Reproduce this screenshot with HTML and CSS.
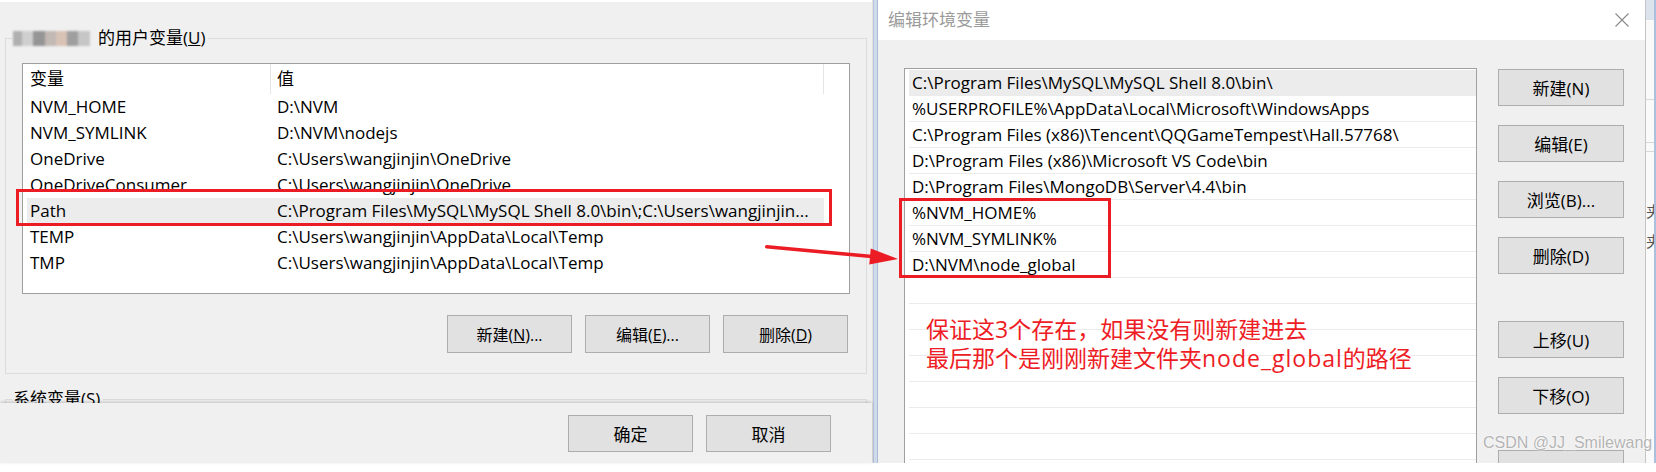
FILE: index.html
```html
<!DOCTYPE html>
<html lang="zh-CN">
<head>
<meta charset="utf-8">
<title>环境变量</title>
<link rel="stylesheet" href="styles.css">
</head>
<body>
<div class="screen">
  <section class="envwin">
    <fieldset class="group">
      <legend class="group-label"><span class="blur-name"></span>的用户变量(<u>U</u>)</legend>
      <div class="group-body">
        <div class="listview">
          <div class="lv-head"><div class="lv-col1">变量</div><div class="lv-col2">值</div></div>
          <div class="lv-row"><span>NVM_HOME</span><span>D:\NVM</span></div>
          <div class="lv-row"><span>NVM_SYMLINK</span><span>D:\NVM\nodejs</span></div>
          <div class="lv-row"><span>OneDrive</span><span>C:\Users\wangjinjin\OneDrive</span></div>
          <div class="lv-row"><span>OneDriveConsumer</span><span>C:\Users\wangjinjin\OneDrive</span></div>
          <div class="lv-row sel"><span>Path</span><span>C:\Program Files\MySQL\MySQL Shell 8.0\bin\;C:\Users\wangjinjin...</span></div>
          <div class="lv-row"><span>TEMP</span><span>C:\Users\wangjinjin\AppData\Local\Temp</span></div>
          <div class="lv-row"><span>TMP</span><span>C:\Users\wangjinjin\AppData\Local\Temp</span></div>
        </div>
        <div class="btn-row">
          <button class="btn">新建(<u>N</u>)...</button>
          <button class="btn">编辑(<u>E</u>)...</button>
          <button class="btn">删除(<u>D</u>)</button>
        </div>
      </div>
    </fieldset>
    <div class="sys-clip">
      <fieldset class="group sys"><legend class="group-label">系统变量(<u>S</u>)</legend></fieldset>
    </div>
    <div class="footer">
      <button class="btn">确定</button>
      <button class="btn">取消</button>
    </div>
  </section>

  <div class="frame-edge"></div>

  <section class="editwin">
    <header class="titlebar">
      <span class="title">编辑环境变量</span>
      <svg class="close" viewBox="0 0 14 14"><path d="M0.5 0.5 L13.5 13.5 M13.5 0.5 L0.5 13.5" stroke="#8a8a8a" stroke-width="1.1" fill="none"/></svg>
    </header>
    <div class="edit-body">
      <div class="pathlist">
        <div class="pl-row sel">C:\Program Files\MySQL\MySQL Shell 8.0\bin\</div>
        <div class="pl-row">%USERPROFILE%\AppData\Local\Microsoft\WindowsApps</div>
        <div class="pl-row">C:\Program Files (x86)\Tencent\QQGameTempest\Hall.57768\</div>
        <div class="pl-row">D:\Program Files (x86)\Microsoft VS Code\bin</div>
        <div class="pl-row">D:\Program Files\MongoDB\Server\4.4\bin</div>
        <div class="pl-row">%NVM_HOME%</div>
        <div class="pl-row">%NVM_SYMLINK%</div>
        <div class="pl-row">D:\NVM\node_global</div>
        <div class="pl-row"></div>
        <div class="pl-row"></div>
        <div class="pl-row"></div>
        <div class="pl-row"></div>
        <div class="pl-row"></div>
        <div class="pl-row"></div>
        <div class="pl-row"></div>
        <div class="pl-row"></div>
        <div class="note">保证这3个存在，如果没有则新建进去<br>最后那个是刚刚新建文件夹<span class="note-latin">node_global</span>的路径</div>
      </div>
      <div class="btn-col">
        <button class="btn">新建(N)</button>
        <button class="btn">编辑(E)</button>
        <button class="btn">浏览(B)...</button>
        <button class="btn">删除(D)</button>
        <button class="btn push">上移(U)</button>
        <button class="btn">下移(O)</button>
        <button class="btn push2">编辑文本(T)...</button>
      </div>
    </div>
  </section>

  <div class="bgstrip">
    <div class="bg-top"></div>
    <div class="bg-rule r1"></div>
    <div class="bg-rule r2"></div>
    <div class="bg-rule r3"></div>
    <div class="bg-char first">夹</div>
    <div class="bg-char">夹</div>
  </div>

  <div class="mark mark-path"></div>
  <div class="mark mark-nvm"></div>
  <svg class="arrow" viewBox="0 0 145 30">
    <line x1="6.7" y1="6.7" x2="112" y2="16.6" stroke="#ec1c24" stroke-width="3.5" stroke-linecap="round"/>
    <polygon points="138,19 110.75,8.4 109.25,24.4" fill="#ec1c24"/>
  </svg>
  <div class="watermark">CSDN @JJ_Smilewang</div>
</div>
</body>
</html>
```

FILE: styles.css
```css
* { box-sizing: border-box; }
html, body { margin: 0; padding: 0; }
body {
  width: 1656px;
  height: 472px;
  overflow: hidden;
  background: #fff;
  font-family: "Open Sans", "Noto Sans CJK SC", sans-serif;
  font-size: 17px;
  color: #000;
}
.screen {
  position: relative;
  display: flex;
  height: 463px;
}

/* ---------- left window: 环境变量 ---------- */
.envwin {
  width: 872px;
  flex: none;
  display: flex;
  flex-direction: column;
  background: #f0f0f0;
  border-top: 2px solid #fff;
}
.group {
  margin: 26px 5px 0;
  padding: 15px 0 20px;
  border: 1px solid #dcdcdc;
  min-width: 0;
}
.group-label {
  margin-left: 6px;
  padding: 0 3px 0 1px;
  line-height: 20px;
  height: 20px;
  white-space: nowrap;
}
.blur-name {
  display: inline-block;
  width: 77px;
  height: 15px;
  margin-right: 8px;
  vertical-align: -2px;
  background: linear-gradient(to right, #b0b0b0 0 12%, #cfcfcf 12% 26%, #959595 26% 42%, #c2b8b4 42% 56%, #d8c2b6 56% 70%, #9f9f9f 70% 85%, #c6c6c6 85%);
  filter: blur(1.2px);
}
.group-body { padding: 0 16px; }
.listview {
  height: 231px;
  background: #fff;
  border: 1px solid #9e9e9e;
  overflow: hidden;
}
.lv-head {
  display: flex;
  height: 30px;
  line-height: 30px;
}
.lv-col1 {
  width: 248px;
  padding-left: 7px;
  border-right: 1px solid #e5e5e5;
}
.lv-col2 {
  width: 553px;
  padding-left: 6px;
  border-right: 1px solid #e5e5e5;
}
.lv-row {
  display: grid;
  grid-template-columns: 247px 1fr;
  width: 797px;
  margin-left: 4px;
  padding-left: 3px;
  height: 26px;
  line-height: 26px;
  white-space: nowrap;
  overflow: hidden;
}
.lv-row.sel { background: #ececec; }

.btn {
  font-family: inherit;
  font-size: 17px;
  color: #000;
  background: #e1e1e1;
  border: 1px solid #adadad;
  border-radius: 0;
  padding: 0;
  white-space: nowrap;
}
.btn-row {
  display: flex;
  justify-content: flex-end;
  gap: 13px;
  margin-top: 21px;
  padding-right: 2px;
}
.btn-row .btn {
  width: 125px;
  height: 38px;
  font-size: 16px;
}
.sys-clip {
  flex: none;
  height: 29px;
  overflow: hidden;
}
.group.sys {
  margin-top: 15px;
  height: 60px;
  padding: 0;
}
.footer {
  flex: none;
  height: 60px;
  position: relative;
  z-index: 1;
  background: #f0f0f0;
  box-shadow: 0 -1px 3px rgba(0, 0, 0, 0.2);
  display: flex;
  justify-content: flex-end;
  align-items: flex-start;
  gap: 13px;
  padding: 12px 41px 0 0;
}
.footer .btn {
  width: 125px;
  height: 37px;
}

.frame-edge {
  width: 6px;
  flex: none;
  background: linear-gradient(to right, #e2e2e2 0 1px, #b4c5dc 1px 2px, #cfdbeb 2px 5px, #a9bcd6 5px 6px);
}

/* ---------- right window: 编辑环境变量 ---------- */
.editwin {
  width: 767px;
  flex: none;
  display: flex;
  flex-direction: column;
  background: #f0f0f0;
  overflow: hidden;
}
.titlebar {
  height: 40px;
  flex: none;
  background: #fff;
  display: flex;
  align-items: center;
  justify-content: space-between;
  padding: 0 16px 4px 10px;
}
.title {
  color: #9b9b9b;
  font-size: 17px;
}
.close {
  width: 14px;
  height: 14px;
  margin-top: 4px;
}
.edit-body {
  flex: 1;
  min-height: 0;
  display: flex;
  padding: 28px 21px 0 26px;
  overflow: hidden;
}
.pathlist {
  width: 573px;
  flex: none;
  position: relative;
  background: #fff;
  border: 1px solid #a0a0a0;
  border-bottom: 0;
  padding: 1px 0 0 4px;
  overflow: hidden;
}
.pl-row {
  height: 26px;
  line-height: 25px;
  padding-left: 3px;
  border-bottom: 1px solid #ebebeb;
  white-space: nowrap;
}
.pl-row.sel { background: #ececec; }
.note {
  position: absolute;
  left: 21px;
  top: 246px;
  color: #ee1d25;
  font-family: "Open Sans", "Noto Sans CJK SC", sans-serif;
  font-size: 23px;
  line-height: 29px;
  white-space: nowrap;
}
.note-latin { letter-spacing: 1px; }
.btn-col {
  margin-left: 21px;
  width: 126px;
  flex: none;
  display: flex;
  flex-direction: column;
  gap: 19px;
  padding-top: 1px;
}
.btn-col .btn {
  height: 37px;
  flex: none;
}
.btn-col .push { margin-top: 28px; }
.btn-col .push2 {
  margin-top: 17px;
  padding-top: 14px;
}

/* ---------- background window sliver ---------- */
.bgstrip {
  flex: 1;
  background: #fafafa;
  border-left: 1px solid #c4c4c4;
  border-right: 2px solid #a9c0de;
  overflow: hidden;
}
.bg-top { height: 20px; background: #dde3ec; }
.bg-rule { border-top: 1px solid #d8d8d8; }
.r1 { margin-top: 79px; }
.r2 { margin-top: 42px; }
.r3 { margin-top: 8px; }
.bg-char {
  font-family: "Noto Sans CJK SC", sans-serif;
  font-size: 15px;
  line-height: 30px;
  color: #555;
}
.bg-char.first { margin-top: 44px; }

/* ---------- annotations ---------- */
.mark {
  position: absolute;
  border: 3px solid #ec1c24;
}
.mark-path { left: 16px; top: 189px; width: 816px; height: 37px; }
.mark-nvm { left: 899px; top: 198px; width: 212px; height: 80px; }
.arrow {
  position: absolute;
  left: 760px;
  top: 240px;
  width: 145px;
  height: 30px;
}
.watermark {
  position: absolute;
  left: 1483px;
  top: 434px;
  font-family: "Liberation Sans", sans-serif;
  font-size: 16px;
  color: #b4b4b4;
  text-shadow: 0 0 2px #fff, 0 0 1px #fff;
}
```
